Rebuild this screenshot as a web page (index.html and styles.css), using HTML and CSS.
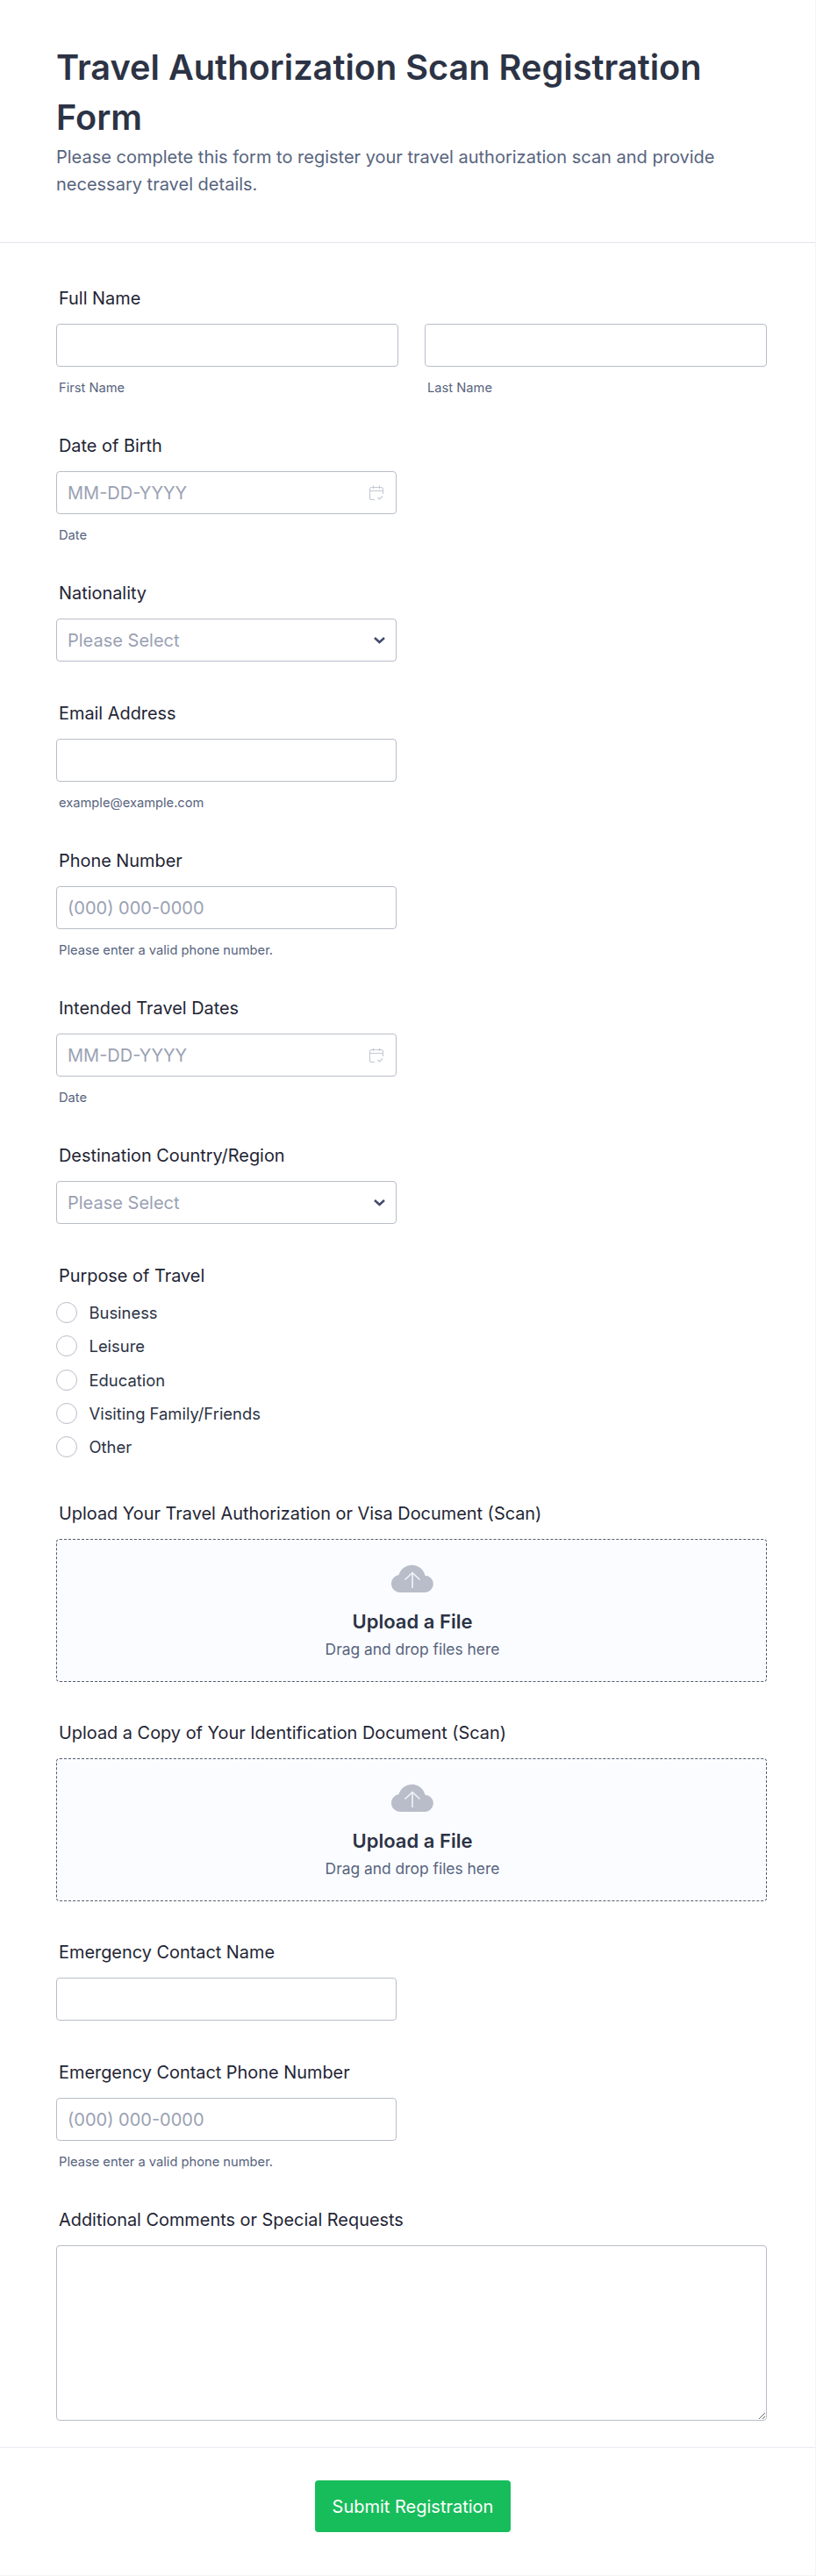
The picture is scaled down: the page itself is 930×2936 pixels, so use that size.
FILE: index.html
```html
<!DOCTYPE html>
<html lang="en">
<head>
<meta charset="utf-8">
<title>Travel Authorization Scan Registration Form</title>
<link rel="stylesheet" href="styles.css">
</head>
<body>
<main class="page">
  <header class="head">
    <h1>Travel Authorization Scan Registration Form</h1>
    <p>Please complete this form to register your travel authorization scan and provide necessary travel details.</p>
  </header>
  <form class="form">
    <div class="field">
      <label class="label">Full Name</label>
      <div class="two">
        <div><input class="box full" type="text"><div class="sub">First Name</div></div>
        <div><input class="box full" type="text"><div class="sub">Last Name</div></div>
      </div>
    </div>
    <div class="field">
      <label class="label">Date of Birth</label>
      <div class="box half wrap"><input class="bare" placeholder="MM-DD-YYYY">
        <svg class="cal" viewBox="0 0 16 18" width="16" height="18"><path d="M6 16.5H2.5a2 2 0 0 1-2-2v-10a2 2 0 0 1 2-2h11a2 2 0 0 1 2 2V10M.5 6.5h15M4.500 .5v3.500M11.500 .5v3.500M9.500 14l2 2 3.500-3.500" fill="none" stroke="#c3c8d3" stroke-width="1.100"/></svg>
      </div>
      <div class="sub">Date</div>
    </div>
    <div class="field">
      <label class="label">Nationality</label>
      <div class="box half wrap"><span class="ph">Please Select</span>
        <svg class="chev" viewBox="0 0 13 8" width="13" height="8"><path d="M1 1l5.500 5L12 1" fill="none" stroke="#434a6e" stroke-width="2.500"/></svg>
      </div>
    </div>
    <div class="field">
      <label class="label">Email Address</label>
      <input class="box half" type="text">
      <div class="sub">example@example.com</div>
    </div>
    <div class="field">
      <label class="label">Phone Number</label>
      <input class="box half" type="text" placeholder="(000) 000-0000">
      <div class="sub">Please enter a valid phone number.</div>
    </div>
    <div class="field">
      <label class="label">Intended Travel Dates</label>
      <div class="box half wrap"><input class="bare" placeholder="MM-DD-YYYY">
        <svg class="cal" viewBox="0 0 16 18" width="16" height="18"><path d="M6 16.5H2.5a2 2 0 0 1-2-2v-10a2 2 0 0 1 2-2h11a2 2 0 0 1 2 2V10M.5 6.5h15M4.500 .5v3.500M11.500 .5v3.500M9.500 14l2 2 3.500-3.500" fill="none" stroke="#c3c8d3" stroke-width="1.100"/></svg>
      </div>
      <div class="sub">Date</div>
    </div>
    <div class="field">
      <label class="label">Destination Country/Region</label>
      <div class="box half wrap"><span class="ph">Please Select</span>
        <svg class="chev" viewBox="0 0 13 8" width="13" height="8"><path d="M1 1l5.500 5L12 1" fill="none" stroke="#434a6e" stroke-width="2.500"/></svg>
      </div>
    </div>
    <div class="field radios-field">
      <label class="label radios-label">Purpose of Travel</label>
      <div class="radios">
        <div class="radio"><span class="dot"></span>Business</div>
        <div class="radio"><span class="dot"></span>Leisure</div>
        <div class="radio"><span class="dot"></span>Education</div>
        <div class="radio"><span class="dot"></span>Visiting Family/Friends</div>
        <div class="radio"><span class="dot"></span>Other</div>
      </div>
    </div>
    <div class="field drop-field">
      <label class="label">Upload Your Travel Authorization or Visa Document (Scan)</label>
      <div class="drop">
        <svg class="cloud" viewBox="0 0 48 33" width="48" height="33"><path d="M10 33a10 10 0 0 1-1.500-19.900A15.500 15.500 0 0 1 38.500 13.800a9.600 9.600 0 0 1-.5 19.200z" fill="#b8bdc9"/><path d="M24 28V10.500M15.500 18.500l8.500-8 8.500 8" fill="none" stroke="#f2f4fa" stroke-width="1.600"/></svg>
        <div class="drop-title">Upload a File</div>
        <div class="drop-sub">Drag and drop files here</div>
      </div>
    </div>
    <div class="field drop-field">
      <label class="label">Upload a Copy of Your Identification Document (Scan)</label>
      <div class="drop">
        <svg class="cloud" viewBox="0 0 48 33" width="48" height="33"><path d="M10 33a10 10 0 0 1-1.500-19.900A15.500 15.500 0 0 1 38.500 13.800a9.600 9.600 0 0 1-.5 19.200z" fill="#b8bdc9"/><path d="M24 28V10.500M15.500 18.500l8.500-8 8.500 8" fill="none" stroke="#f2f4fa" stroke-width="1.600"/></svg>
        <div class="drop-title">Upload a File</div>
        <div class="drop-sub">Drag and drop files here</div>
      </div>
    </div>
    <div class="field">
      <label class="label">Emergency Contact Name</label>
      <input class="box half" type="text">
    </div>
    <div class="field">
      <label class="label">Emergency Contact Phone Number</label>
      <input class="box half" type="text" placeholder="(000) 000-0000">
      <div class="sub">Please enter a valid phone number.</div>
    </div>
    <div class="field last">
      <label class="label">Additional Comments or Special Requests</label>
      <textarea class="box area"></textarea>
    </div>
  </form>
  <footer class="foot"><button class="submit" type="button">Submit Registration</button></footer>
</main>
</body>
</html>
```
FILE: styles.css
```css
* { box-sizing: border-box; }
html, body { margin: 0; padding: 0; background: #fff; }
body { font-family: Inter, "Liberation Sans", sans-serif; color: #2c3345; }
.page { width: 930px; height: 2936px; border-right: 1px solid #f3f3f8; border-bottom: 1px solid #f3f3f8; }
.head { padding: 49px 65px 50px 64px; border-bottom: 1px solid #e3e5f0; }
.head h1 { margin: 0; font-size: 39.700px; line-height: 57px; font-weight: 600; color: #2c3345; }
.head p { margin: 1px 0 0; font-size: 20px; line-height: 31px; color: #57647e; }
.form { padding: 51px 55px 0 64px; }
.field { margin-bottom: 47px; }
.field.last { margin-bottom: 30px; }
.radios-field { margin-bottom: 52px; }
.drop-field { margin-bottom: 46px; }
.label { display: block; margin: 0 0 17px 3px; font-size: 19.900px; line-height: 24px; font-weight: 400; color: #1f2535; }
.two { display: grid; grid-template-columns: 1fr 1fr; gap: 30px; }
.box { display: block; height: 49px; padding: 0 12px; background: #fff; border: 1px solid #b8bdc9; border-radius: 4px; font: 20px Inter, sans-serif; color: #2c3345; outline: none; }
.box::placeholder, .bare::placeholder { color: #9aa1b3; opacity: 1; }
.full { width: 100%; }
.half { width: 388px; }
.wrap { display: flex; align-items: center; justify-content: space-between; padding-right: 14px; }
.bare { flex: 1; min-width: 0; padding: 0; border: 0; outline: none; background: none; font: 20px Inter, sans-serif; }
.ph { font-size: 20px; color: #9aa1b3; }
.cal { flex: none; }
.chev { flex: none; margin-right: -2px; }
.sub { height: 17px; margin: 14px 0 0 3px; font-size: 14.700px; line-height: 20px; color: #57647e; }
.radios-label { margin-bottom: 18px; }
.radios { display: flex; flex-direction: column; gap: 14.300px; }
.radio { display: flex; align-items: center; gap: 13.500px; height: 24px; font-size: 18.400px; color: #2c3345; }
.dot { width: 24px; height: 24px; border: 1px solid #b8bdc9; border-radius: 50%; flex: none; }
.drop { display: flex; flex-direction: column; align-items: center; height: 163px; padding: 27px 0 0 2px; background: #fbfcff; border: 1px dashed #555c70; border-radius: 4px; }
.cloud { display: block; }
.drop-title { margin-top: 18px; font-size: 22px; line-height: 30px; font-weight: 600; color: #2c3345; }
.drop-sub { margin-top: 5px; font-size: 17.400px; line-height: 24px; color: #57647e; }
.area { width: 100%; height: 200px; padding: 12px; }
.foot { display: flex; justify-content: center; padding: 37px 0 49px 12px; border-top: 1px solid #eaebf2; }
.submit { width: 223px; height: 59px; background: #18bd5b; color: #fff; border: 0; border-radius: 4px; font: 400 20px Inter, sans-serif; }
```
